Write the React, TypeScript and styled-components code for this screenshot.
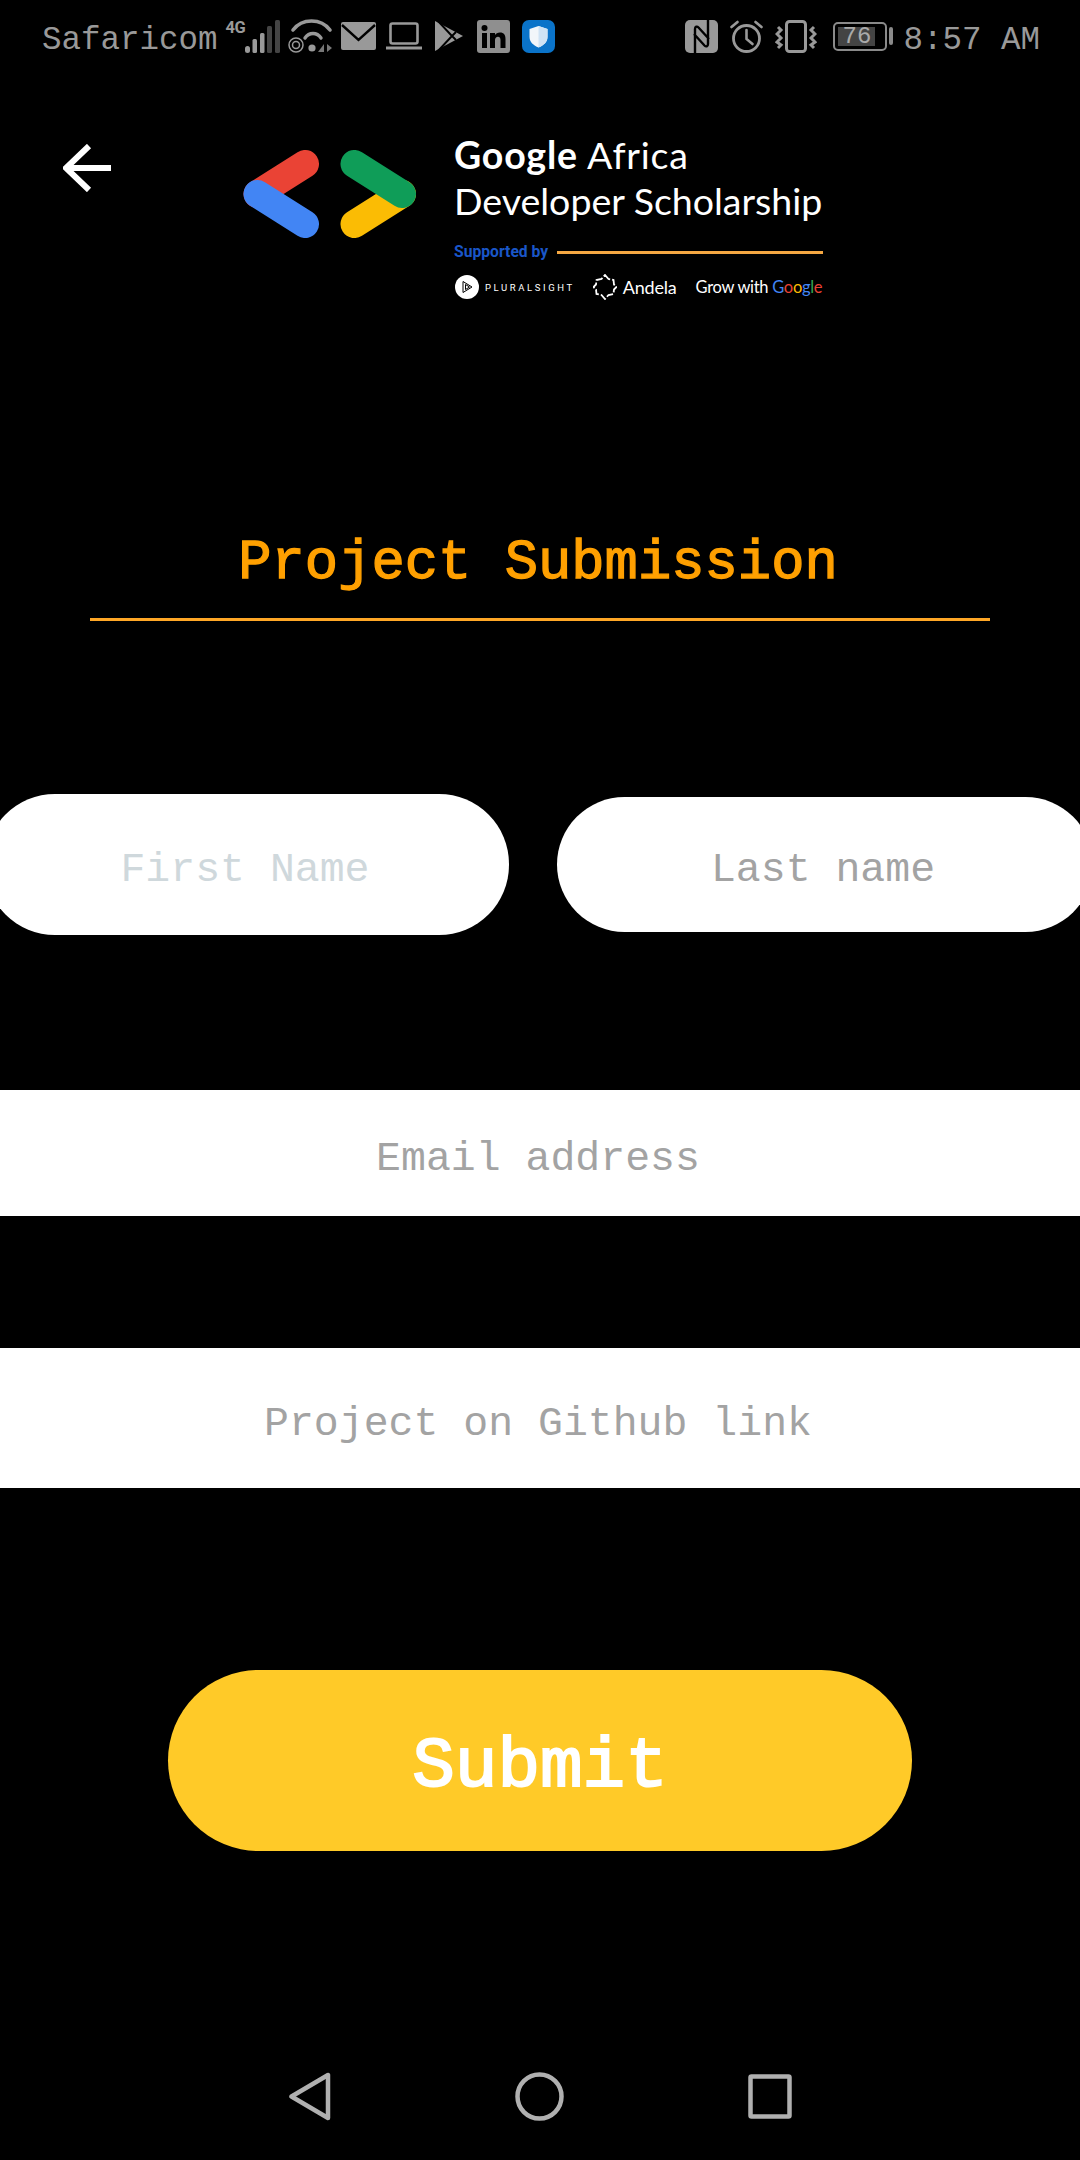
import styled, { createGlobalStyle } from 'styled-components'

const GlobalStyle = createGlobalStyle`
    html, body {
        margin: 0;
        padding: 0;
        background: #000;
        overflow-x: hidden;
    }
`

const Page = styled.div`
    width: 1080px;
    height: 2160px;
    background: #000;
    overflow: hidden;

    display: flex;
    flex-direction: column;
`

const StatusBar = styled.div`
    height: 72px;
    padding: 0 40px 0 42px;
    flex-shrink: 0;

    display: flex;
    justify-content: space-between;
    align-items: center;
`

const StatusGroup = styled.div`
    display: flex;
    align-items: center;
`

const StatusText = styled.span<{ $ml?: number }>`
    font-family: "Liberation Mono", monospace;
    font-size: 32.5px;
    line-height: 40px;
    color: #999;
    white-space: nowrap;
    margin: 10px 0 0 ${(p) => p.$ml ?? 0}px;
`

const NetworkLabel = styled.span`
    width: 19px;
    margin: 0 0 17px 8px;
    font-family: Roboto, sans-serif;
    font-size: 16.5px;
    line-height: 16px;
    font-weight: 700;
    letter-spacing: -0.6px;
    color: #999;
    white-space: nowrap;
`

const StatusIcon = styled.svg<{ $ml: number }>`
    display: block;
    flex-shrink: 0;
    margin-left: ${(p) => p.$ml}px;
`

const Battery = styled.div`
    margin-left: 16px;
    display: flex;
    align-items: center;
    gap: 2px;
`

const BatteryBody = styled.div`
    width: 54px;
    height: 29px;
    box-sizing: border-box;
    border: 2px solid #8a8a8a;
    border-radius: 5px;
    padding: 3px;
    display: flex;
`

const BatteryLevel = styled.div`
    width: 37px;
    background: #444;
    color: #aaa;
    font-family: "Liberation Mono", monospace;
    font-size: 24px;
    line-height: 19px;
    text-align: center;
    white-space: nowrap;
`

const BatteryTip = styled.div`
    width: 4px;
    height: 18px;
    background: #8a8a8a;
    border-radius: 2px;
`

const Header = styled.header`
    height: 238px;
    flex-shrink: 0;
    display: flex;
    align-items: flex-start;
`

const BackIcon = styled.svg`
    display: block;
    margin: 72px 0 0 63px;
`

const LogoMark = styled.svg`
    display: block;
    margin: 78px 0 0 131px;
`

const LogoText = styled.div`
    margin: 60px 0 0 36px;
    width: 369px;
    font-family: Lato, sans-serif;
    color: #fff;
`

const LogoTitle = styled.div<{ $spacing: number }>`
    font-size: 37.5px;
    line-height: 46px;
    white-space: nowrap;
    letter-spacing: ${(p) => p.$spacing}px;

    b {
        font-weight: 700;
    }
`

const SupportRow = styled.div`
    margin-top: 20px;
    display: flex;
    align-items: center;
    gap: 9px;
`

const SupportLabel = styled.span`
    font-family: Roboto, sans-serif;
    font-size: 15.7px;
    line-height: 16px;
    font-weight: 700;
    color: #1a56c8;
    white-space: nowrap;
`

const SupportLine = styled.div`
    flex: 1;
    height: 3px;
    background: #f5a742;
`

const SponsorRow = styled.div`
    margin-top: 14px;
    padding-left: 1px;
    display: flex;
    align-items: center;
`

const PluralName = styled.span`
    margin-left: 6px;
    font-family: Roboto, sans-serif;
    font-size: 9.5px;
    letter-spacing: 2.6px;
    white-space: nowrap;
`

const AndelaIcon = styled.svg`
    display: block;
    margin-left: 18px;
`

const AndelaName = styled.span`
    margin-left: 6px;
    font-size: 18px;
    letter-spacing: -0.2px;
    white-space: nowrap;
`

const GrowName = styled.span`
    margin-left: 19px;
    font-size: 16.5px;
    letter-spacing: -0.3px;
    white-space: nowrap;
`

const GoogleLetter = styled.span<{ $color: string }>`
    color: ${(p) => p.$color};
`

const Title = styled.h1`
    margin: 223px 90px 0;
    padding: 0 4px 23px 0;
    border-bottom: 3px solid #ffa726;
    font-family: "Liberation Mono", monospace;
    font-size: 55.5px;
    line-height: 62px;
    font-weight: 400;
    -webkit-text-stroke: 1.3px #ffa000;
    text-align: center;
    color: #ffa000;
`

const NameRow = styled.div`
    margin: 173px -13px 0 -15px;
    height: 141px;
    display: flex;
    align-items: center;
    gap: 48px;
`

const Field = styled.input<{ $hint?: string }>`
    display: block;
    box-sizing: border-box;
    border: none;
    outline: none;
    background: #fff;
    padding: 10px 4px 0 0;
    text-align: center;
    font-family: "Liberation Mono", monospace;
    font-size: 41.5px;
    color: #333;

    &::placeholder {
        color: ${(p) => p.$hint ?? '#a3a3a3'};
        opacity: 1;
    }
`

const NameField = styled(Field)<{ $width: number; $height: number }>`
    width: ${(p) => p.$width}px;
    height: ${(p) => p.$height}px;
    border-radius: 70px;
    flex-shrink: 0;
`

const WideField = styled(Field)<{ $top: number; $height: number }>`
    width: 100%;
    flex-shrink: 0;
    margin-top: ${(p) => p.$top}px;
    height: ${(p) => p.$height}px;
`

const SubmitButton = styled.button`
    display: block;
    flex-shrink: 0;
    width: 744px;
    height: 181px;
    margin: 182px auto 0;
    padding: 12px 0 0;
    border: none;
    border-radius: 91px;
    background: #ffca28;
    color: #fff;
    font-family: "Liberation Mono", monospace;
    font-size: 71px;
    font-weight: 400;
    -webkit-text-stroke: 2px #fff;
`

const NavBar = styled.nav`
    margin-top: auto;
    padding-bottom: 39px;
    display: flex;
    justify-content: center;
    align-items: center;
    gap: 184px;
`

const StatusBarRow = () => (
    <StatusBar>
        <StatusGroup>
            <StatusText>Safaricom</StatusText>
            <NetworkLabel>4G</NetworkLabel>
            <StatusIcon $ml={0} width="35" height="33" viewBox="19 0 35 33">
                <g fill="#999">
                    <rect x="19" y="26" width="5" height="7" rx="2.500" />
                    <rect x="26.500" y="19" width="4.500" height="14" rx="1.500" />
                    <rect x="34" y="13" width="4.500" height="20" rx="1.500" />
                </g>
                <g fill="#444">
                    <rect x="41" y="6" width="5" height="27" rx="1.500" />
                    <rect x="49" y="0" width="5" height="33" rx="1.500" />
                </g>
            </StatusIcon>
            <StatusIcon $ml={8} width="45" height="34" viewBox="0 0 45 34" fill="none">
                <g stroke="#999" strokeLinecap="round">
                    <path d="M5 11C14 -1 33 -1 42 11" strokeWidth="3.600" />
                    <path d="M17 19C21 13 29 13 33 19" strokeWidth="3.400" />
                    <circle cx="8" cy="26" r="7" strokeWidth="1.500" />
                    <circle cx="8" cy="26" r="3.500" strokeWidth="1.500" />
                </g>
                <circle cx="24" cy="29" r="3.600" fill="#999" />
                <path d="M36 25v8h-6zM39 25l5 4-5 4z" fill="#777" />
            </StatusIcon>
            <StatusIcon $ml={8} width="35" height="28" viewBox="0 0 35 28">
                <rect width="35" height="28" rx="2" fill="#999" />
                <path d="M1 3l16.500 15L34 3" stroke="#000" strokeWidth="2.400" fill="none" />
            </StatusIcon>
            <StatusIcon $ml={10} width="36" height="28" viewBox="0 0 36 28" fill="none">
                <rect x="4.500" y="1.500" width="27" height="20" rx="2" stroke="#999" strokeWidth="2.600" />
                <path d="M0 26h36" stroke="#999" strokeWidth="2.800" />
            </StatusIcon>
            <StatusIcon $ml={13} width="28" height="30" viewBox="0 0 28 30">
                <path d="M0 0l28 15L0 30z" fill="#999" />
                <path d="M3 0l14 15L3 30M21 11l-4 4 4 4" stroke="#000" strokeWidth="2" fill="none" />
            </StatusIcon>
            <StatusIcon $ml={14} width="33" height="33" viewBox="0 0 33 33">
                <rect width="33" height="33" rx="3" fill="#8f8f8f" />
                <rect x="5" y="13" width="5" height="15" fill="#000" />
                <circle cx="7.500" cy="8" r="3" fill="#000" />
                <path d="M13 13h5v2c1-1.500 2.500-2.500 5-2.500 4 0 5.500 2.500 5.500 6.500v9h-5v-8c0-2-.7-3.300-2.500-3.300S18 18 18 20v8h-5z" fill="#000" />
            </StatusIcon>
            <StatusIcon $ml={12} width="33" height="33" viewBox="0 0 33 33">
                <rect width="33" height="33" rx="7" fill="#0a73c9" />
                <path d="M16.500 6l9 3v8c0 5-4 8.500-9 10.500-5-2-9-5.500-9-10.500V9z" fill="#f2f6fa" />
                <path d="M16.500 6l9 3v8c0 5-4 8.500-9 10.500z" fill="#cfe3f5" />
            </StatusIcon>
        </StatusGroup>
        <StatusGroup>
            <StatusIcon $ml={0} width="33" height="33" viewBox="0 0 33 33">
                <rect width="33" height="33" rx="5" fill="#999" />
                <path d="M10 33V9c0-2.500 2-3 3.500-1.500L24 19M23 0v24c0 2.500-2 3-3.500 1.500L9 14" stroke="#000" strokeWidth="2.400" fill="none" />
            </StatusIcon>
            <StatusIcon $ml={12} width="33" height="33" viewBox="0 0 33 33" fill="none" stroke="#999" strokeLinecap="round">
                <circle cx="16.500" cy="18.500" r="13" strokeWidth="2.800" />
                <path d="M16.500 10v9l6 5" strokeWidth="2.600" />
                <path d="M1.500 7l6-5M31.500 7l-6-5" strokeWidth="2.600" />
            </StatusIcon>
            <StatusIcon $ml={12} width="42" height="33" viewBox="0 0 42 33" fill="none" stroke="#999">
                <rect x="11.500" y="1.500" width="19" height="30" rx="3" strokeWidth="3" />
                <path d="M3 7l3 3-4 4 4 4-4 4 4 3-3 3M39 7l-3 3 4 4-4 4 4 4-4 3 3 3" strokeWidth="3" />
            </StatusIcon>
            <Battery>
                <BatteryBody>
                    <BatteryLevel>76</BatteryLevel>
                </BatteryBody>
                <BatteryTip />
            </Battery>
            <StatusText $ml={10}>8:57 AM</StatusText>
        </StatusGroup>
    </StatusBar>
)

const App = () => {
    return (
        <Page>
            <GlobalStyle />
            <StatusBarRow />

            <Header>
                <BackIcon width="48" height="48" viewBox="0 0 48 48" fill="none" stroke="#fff" strokeWidth="6">
                    <path d="M48 24H3M26 2L3 24l23 22" />
                </BackIcon>
                <LogoMark width="176" height="88" viewBox="242 150 176 88" fill="none" strokeWidth="28" strokeLinecap="round">
                    <path d="M305 164L257.500 194" stroke="#ea4335" />
                    <path d="M257.500 194L305 224" stroke="#4285f4" />
                    <path d="M402 194L354.500 224" stroke="#fbbc04" />
                    <path d="M354.500 164L402 194" stroke="#0f9d58" />
                </LogoMark>
                <LogoText>
                    <LogoTitle $spacing={0.8}><b>Google</b> Africa</LogoTitle>
                    <LogoTitle $spacing={0}>Developer Scholarship</LogoTitle>
                    <SupportRow>
                        <SupportLabel>Supported by</SupportLabel>
                        <SupportLine />
                    </SupportRow>
                    <SponsorRow>
                        <svg width="24" height="24" viewBox="0 0 24 24" fill="none">
                            <circle cx="12" cy="12" r="12" fill="#fff" />
                            <path d="M8 6.500v11l9-5.500zM10.500 9.500v5L14.500 12z" stroke="#000" strokeWidth="1" />
                        </svg>
                        <PluralName>PLURALSIGHT</PluralName>
                        <AndelaIcon width="24" height="26" viewBox="0 0 24 26" fill="none" stroke="#fff" strokeWidth="1.800">
                            <path d="M12 1l3.500 4 5 1 .5 4.500L23.500 13 21 15.500l-.5 4.500-5 1L12 25l-3.500-4-5-1L3 15.500.5 13 3 10.500 3.500 6l5-1z" strokeDasharray="7 2" />
                        </AndelaIcon>
                        <AndelaName>Andela</AndelaName>
                        <GrowName>
                            Grow with{' '}
                            <GoogleLetter $color="#4285f4">G</GoogleLetter>
                            <GoogleLetter $color="#ea4335">o</GoogleLetter>
                            <GoogleLetter $color="#fbbc04">o</GoogleLetter>
                            <GoogleLetter $color="#4285f4">g</GoogleLetter>
                            <GoogleLetter $color="#34a853">l</GoogleLetter>
                            <GoogleLetter $color="#ea4335">e</GoogleLetter>
                        </GrowName>
                    </SponsorRow>
                </LogoText>
            </Header>

            <Title>Project Submission</Title>

            <NameRow>
                <NameField $width={524} $height={141} $hint="#cfd8dc" placeholder="First Name" />
                <NameField $width={536} $height={135} placeholder="Last name" />
            </NameRow>

            <WideField $top={155} $height={126} placeholder="Email address" />
            <WideField $top={132} $height={140} placeholder="Project on Github link" />

            <SubmitButton>Submit</SubmitButton>

            <NavBar>
                <svg width="42" height="49" viewBox="0 0 42 49" fill="none" stroke="#b0b0b0" strokeWidth="4.500" strokeLinejoin="round">
                    <path d="M39 3v43L2.500 24.500z" />
                </svg>
                <svg width="49" height="49" viewBox="0 0 49 49" fill="none" stroke="#b0b0b0" strokeWidth="4.500">
                    <circle cx="24.500" cy="24.500" r="22" />
                </svg>
                <svg width="44" height="45" viewBox="0 0 44 45" fill="none" stroke="#b0b0b0" strokeWidth="4.500" strokeLinejoin="round">
                    <rect x="2.500" y="2.500" width="39" height="40" rx="1" />
                </svg>
            </NavBar>
        </Page>
    )
}

export default App
